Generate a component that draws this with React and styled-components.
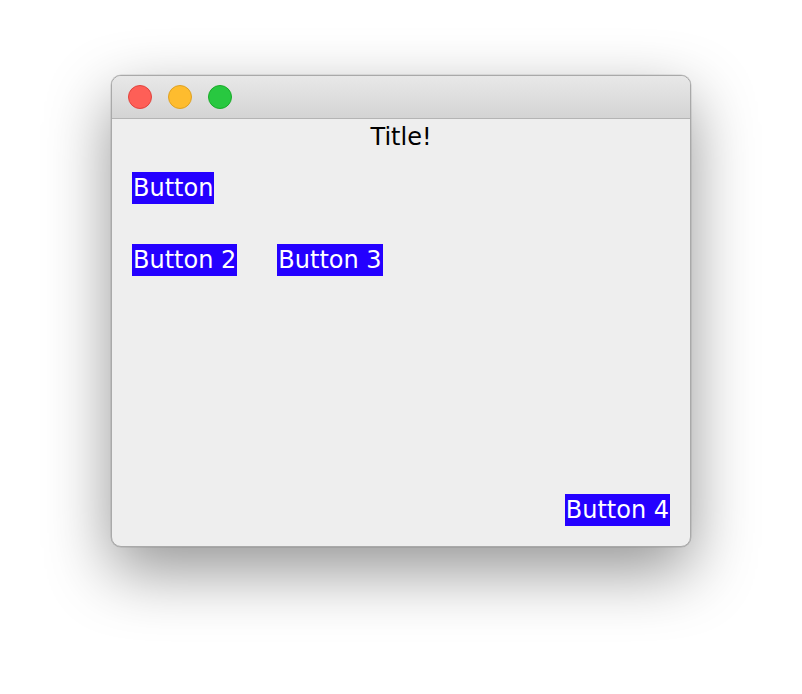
import React from "react";
import styled, { createGlobalStyle } from "styled-components";

const Global = createGlobalStyle`
  html, body { margin: 0; padding: 0; background: #ffffff; }
  body { font-family: "DejaVu Sans", "Lucida Grande", sans-serif; }
`;

const Page = styled.div`
  width: 802px;
  height: 694px;
  padding: 75px 0 0 111px;
  box-sizing: border-box;
`;

const Window = styled.div`
  width: 580px;
  height: 472px;
  box-sizing: border-box;
  border: 1px solid #a9a9a9;
  border-radius: 10px;
  overflow: hidden;
  display: flex;
  flex-direction: column;
  background: #eeeeee;
  box-shadow: 0 24px 64px rgba(0, 0, 0, 0.42), 0 0 0 0.5px rgba(0, 0, 0, 0.15);
`;

const TitleBar = styled.div`
  height: 43px;
  flex: none;
  display: flex;
  align-items: center;
  gap: 16px;
  padding: 0 0 1px 16px;
  box-sizing: border-box;
  background: linear-gradient(#e8e8e8, #d4d4d4);
  border-bottom: 1px solid #b4b4b4;
`;

const Light = styled.div`
  width: 24px;
  height: 24px;
  box-sizing: border-box;
  border-radius: 50%;
  background: ${(p) => p.$bg};
  border: 1px solid ${(p) => p.$edge};
`;

const Content = styled.div`
  flex: 1;
  display: flex;
  flex-direction: column;
  padding: 0 20px 20px 20px;
`;

const Title = styled.div`
  text-align: center;
  font-size: 24px;
  line-height: 32px;
  padding-top: 2px;
  color: #000;
`;

const Row = styled.div`
  display: flex;
  gap: 40px;
  margin-top: ${(p) => p.$top}px;
  justify-content: ${(p) => (p.$end ? "flex-end" : "flex-start")};
`;

const Spacer = styled.div`
  flex: 1;
`;

const Button = styled.div`
  background: #2400ff;
  color: #ffffff;
  font-size: 24px;
  line-height: 32px;
  height: 32px;
  padding: 0 1px;
  white-space: nowrap;
`;

export default function App() {
  return (
    <>
      <Global />
      <Page>
        <Window>
          <TitleBar>
            <Light $bg="#fe5f57" $edge="#e0443e" />
            <Light $bg="#febc2e" $edge="#dea123" />
            <Light $bg="#28c840" $edge="#1aab29" />
          </TitleBar>
          <Content>
            <Title>Title!</Title>
            <Row $top={19}>
              <Button>Button</Button>
            </Row>
            <Row $top={40}>
              <Button>Button 2</Button>
              <Button>Button 3</Button>
            </Row>
            <Spacer />
            <Row $end>
              <Button>Button 4</Button>
            </Row>
          </Content>
        </Window>
      </Page>
    </>
  );
}
